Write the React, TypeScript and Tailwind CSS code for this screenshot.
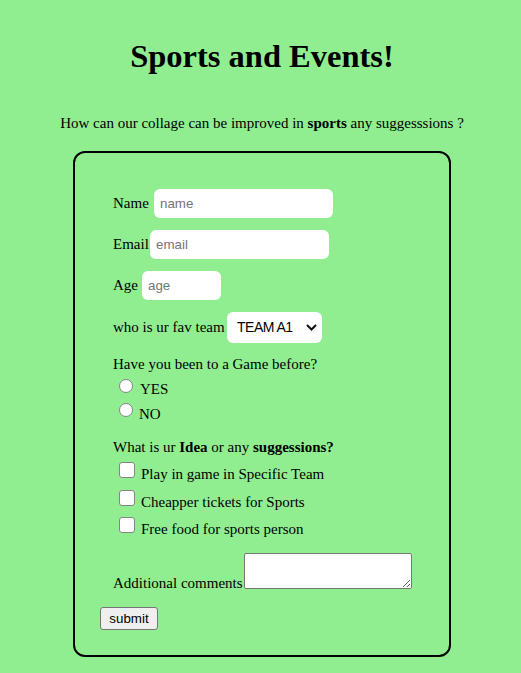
import React from "react";

export default function App() {
  return (
    <div className="min-h-screen bg-[#90ee90] pt-[37.5px] pb-[16px] pl-[3px] text-black font-['Liberation_Serif',serif] text-[15px] leading-[17px]">
      <h1 className="text-center text-[32.5px] leading-[37px] font-bold">Sports and Events!</h1>
      <p className="mt-[40px] text-center">
        How can our collage can be improved in <b>sports</b> any suggesssions ?
      </p>
      <div className="mx-auto mt-[19.6px] w-[378px] rounded-[12px] border-2 border-black pt-[36px] pb-[25px] pl-[25px]">
        <div className="pl-[13px] whitespace-nowrap">
          <div className="flex h-[29px] items-center">
            <span className="w-[41px] shrink-0">Name</span>
            <input
              placeholder="name"
              className="h-[29px] w-[179px] rounded-[6px] bg-white px-[6px] text-[13.33px] font-['Liberation_Sans',sans-serif] text-black placeholder:text-[#757575] outline-none"
            />
          </div>
          <div className="mt-[12px] flex h-[29px] items-center">
            <span className="w-[37px] shrink-0">Email</span>
            <input
              placeholder="email"
              className="h-[29px] w-[179px] rounded-[6px] bg-white px-[6px] text-[13.33px] font-['Liberation_Sans',sans-serif] text-black placeholder:text-[#757575] outline-none"
            />
          </div>
          <div className="mt-[12px] flex h-[29px] items-center">
            <span className="w-[29px] shrink-0">Age</span>
            <input
              placeholder="age"
              className="h-[29px] w-[79px] rounded-[6px] bg-white px-[6px] text-[13.33px] font-['Liberation_Sans',sans-serif] text-black placeholder:text-[#757575] outline-none"
            />
          </div>
          <div className="mt-[12px] flex h-[31px] items-center">
            <span className="w-[114px] shrink-0">who is ur fav team</span>
            <div className="relative h-[31px] w-[95px]">
              <select className="h-[31px] w-[95px] appearance-none rounded-[6px] bg-white pl-[10px] text-[14px] tracking-[-0.5px] font-['Liberation_Sans',sans-serif] text-black outline-none">
                <option>TEAM A1</option>
                <option>TEAM B1</option>
              </select>
              <svg
                className="pointer-events-none absolute right-[5px] top-[12px]"
                width="11"
                height="7"
                viewBox="0 0 11 7"
                fill="none"
              >
                <path d="M1 1L5.5 5.5L10 1" stroke="#111" strokeWidth="2" />
              </svg>
            </div>
          </div>

          <div className="mt-[12.7px]">Have you been to a Game before?</div>
          <div className="mt-[6.3px] flex items-start pl-[6px]">
            <input type="radio" name="game" className="h-[14px] w-[14px] shrink-0 appearance-none rounded-full border border-[#858585] bg-white" />
            <span className="ml-[7px] mt-[2.4px]">YES</span>
          </div>
          <div className="mt-[5px] flex items-start pl-[6px]">
            <input type="radio" name="game" className="h-[14px] w-[14px] shrink-0 appearance-none rounded-full border border-[#858585] bg-white" />
            <span className="ml-[6px] mt-[2.4px]">NO</span>
          </div>

          <div className="mt-[16px]">
            What is ur <b>Idea</b> or any <b>suggessions?</b>
          </div>
          <div className="mt-[6.5px] flex items-start pl-[6px]">
            <input type="checkbox" className="h-[16px] w-[16px] shrink-0 appearance-none rounded-[3px] border border-[#858585] bg-white" />
            <span className="ml-[6px] mt-[4px]">Play in game in Specific Team</span>
          </div>
          <div className="mt-[6.5px] flex items-start pl-[6px]">
            <input type="checkbox" className="h-[16px] w-[16px] shrink-0 appearance-none rounded-[3px] border border-[#858585] bg-white" />
            <span className="ml-[6px] mt-[4px]">Cheapper tickets for Sports</span>
          </div>
          <div className="mt-[6.5px] flex items-start pl-[6px]">
            <input type="checkbox" className="h-[16px] w-[16px] shrink-0 appearance-none rounded-[3px] border border-[#858585] bg-white" />
            <span className="ml-[6px] mt-[4px]">Free food for sports person</span>
          </div>

          <div className="mt-[15px] flex items-end">
            <span className="w-[131px] shrink-0">Additional comments</span>
            <textarea className="mb-[3px] h-[36px] w-[168px] rounded-[2px] border border-[#767676] bg-white outline-none" />
          </div>
        </div>
        <button className="mt-[14.5px] h-[23px] w-[58px] rounded-[3px] border border-[#767676] bg-[#efefef] text-[13.33px] font-['Liberation_Sans',sans-serif] text-black">
          submit
        </button>
      </div>
    </div>
  );
}
